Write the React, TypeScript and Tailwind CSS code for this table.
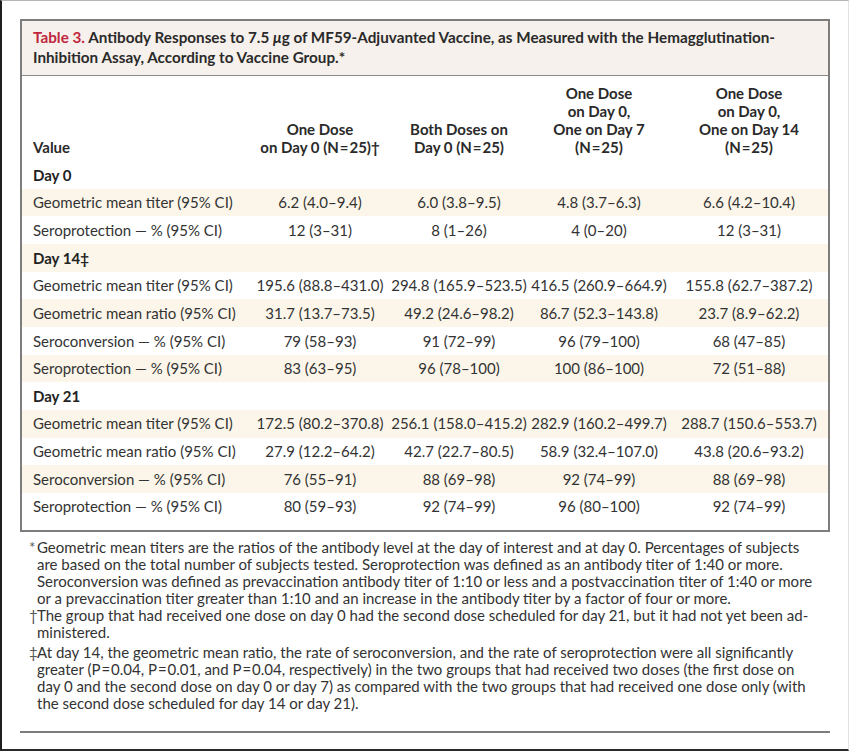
import React from "react";

type Row =
  | { kind: "section"; label: React.ReactNode }
  | { kind: "data"; label: string; values: string[] };

const rows: Row[] = [
  { kind: "section", label: "Day 0" },
  { kind: "data", label: "Geometric mean titer (95% CI)", values: ["6.2 (4.0–9.4)", "6.0 (3.8–9.5)", "4.8 (3.7–6.3)", "6.6 (4.2–10.4)"] },
  { kind: "data", label: "Seroprotection — % (95% CI)", values: ["12 (3–31)", "8 (1–26)", "4 (0–20)", "12 (3–31)"] },
  { kind: "section", label: <>Day 14‡</> },
  { kind: "data", label: "Geometric mean titer (95% CI)", values: ["195.6 (88.8–431.0)", "294.8 (165.9–523.5)", "416.5 (260.9–664.9)", "155.8 (62.7–387.2)"] },
  { kind: "data", label: "Geometric mean ratio (95% CI)", values: ["31.7 (13.7–73.5)", "49.2 (24.6–98.2)", "86.7 (52.3–143.8)", "23.7 (8.9–62.2)"] },
  { kind: "data", label: "Seroconversion — % (95% CI)", values: ["79 (58–93)", "91 (72–99)", "96 (79–100)", "68 (47–85)"] },
  { kind: "data", label: "Seroprotection — % (95% CI)", values: ["83 (63–95)", "96 (78–100)", "100 (86–100)", "72 (51–88)"] },
  { kind: "section", label: "Day 21" },
  { kind: "data", label: "Geometric mean titer (95% CI)", values: ["172.5 (80.2–370.8)", "256.1 (158.0–415.2)", "282.9 (160.2–499.7)", "288.7 (150.6–553.7)"] },
  { kind: "data", label: "Geometric mean ratio (95% CI)", values: ["27.9 (12.2–64.2)", "42.7 (22.7–80.5)", "58.9 (32.4–107.0)", "43.8 (20.6–93.2)"] },
  { kind: "data", label: "Seroconversion — % (95% CI)", values: ["76 (55–91)", "88 (69–98)", "92 (74–99)", "88 (69–98)"] },
  { kind: "data", label: "Seroprotection — % (95% CI)", values: ["80 (59–93)", "92 (74–99)", "96 (80–100)", "92 (74–99)"] },
];

const eq = "\u200A=\u200A";

const footnotes: { mark: string; lines: string[]; extra?: boolean }[] = [
  {
    mark: "*",
    lines: [
      "Geometric mean titers are the ratios of the antibody level at the day of interest and at day 0. Percentages of subjects",
      "are based on the total number of subjects tested. Seroprotection was defined as an antibody titer of 1:40 or more.",
      "Seroconversion was defined as prevaccination antibody titer of 1:10 or less and a postvaccination titer of 1:40 or more",
      "or a prevaccination titer greater than 1:10 and an increase in the antibody titer by a factor of four or more.",
    ],
  },
  {
    mark: "†",
    lines: [
      "The group that had received one dose on day 0 had the second dose scheduled for day 21, but it had not yet been ad-",
      "ministered.",
    ],
  },
  {
    mark: "‡",
    extra: true,
    lines: [
      "At day 14, the geometric mean ratio, the rate of seroconversion, and the rate of seroprotection were all significantly",
      `greater (P${eq}0.04, P${eq}0.01, and P${eq}0.04, respectively) in the two groups that had received two doses (the first dose on`,
      "day 0 and the second dose on day 0 or day 7) as compared with the two groups that had received one dose only (with",
      "the second dose scheduled for day 14 or day 21).",
    ],
  },
];

const gridCols = "grid grid-cols-[228px_140px_138px_142px_158px]";

export default function App() {
  return (
    <div className="h-[751px] w-[849px] overflow-hidden border-t border-b-2 border-l-2 border-r border-t-[#b5b5b5] border-b-[#2a2a2a] border-l-[#1e1e1e] border-r-[#e2e2e2] bg-white pl-[18px] pt-[18px] font-['Lato',sans-serif] text-[15px] text-[#222]">
      <div className="w-[810px] border-2 border-[#7d7d7d]">
        <div className="h-[55px] border-b border-[#8a8a8a] bg-[#f6f1ec] pl-[11px] pt-[6px] text-[15.25px] font-bold leading-[20px] text-[#2a2a2a]">
          <span className="text-[#c0273d]">Table 3.</span> Antibody Responses to 7.5{" "}
          <i>μ</i>g of MF59-Adjuvanted Vaccine, as Measured with the Hemagglutination-
          <br />
          Inhibition Assay, According to Vaccine Group.*
        </div>

        <div className={`${gridCols} h-[85px] items-end pb-[5px] text-center leading-[18px] font-bold text-[#2a2a2a]`}>
          <div className="pl-[11px] text-left">Value</div>
          <div>
            One Dose
            <br />
            on Day 0 (N{eq}25)†
          </div>
          <div>
            Both Doses on
            <br />
            Day 0 (N{eq}25)
          </div>
          <div>
            One Dose
            <br />
            on Day 0,
            <br />
            One on Day 7
            <br />
            (N{eq}25)
          </div>
          <div>
            One Dose
            <br />
            on Day 0,
            <br />
            One on Day 14
            <br />
            (N{eq}25)
          </div>
        </div>

        <div className="pb-[9px]">
          {rows.map((row, i) => (
            <div
              key={i}
              className={`${gridCols} h-[27.67px] items-center ${i % 2 === 1 ? "bg-[#fcf6ea]" : "bg-white"}`}
            >
              {row.kind === "section" ? (
                <div className="pl-[11px] font-bold text-[#222]">{row.label}</div>
              ) : (
                <>
                  <div className="pl-[11px] text-[#333]">{row.label}</div>
                  {row.values.map((v, j) => (
                    <div key={j} className="text-center text-[#333]">
                      {v}
                    </div>
                  ))}
                </>
              )}
            </div>
          ))}
        </div>
      </div>

      <div className="w-[810px] pt-[7px] text-[#333] leading-[17px]">
        {footnotes.map((f) => (
          <div key={f.mark} className={`flex ${f.extra ? "mt-[3px]" : ""}`}>
            <span className="w-[15px] shrink-0 pl-[9px] text-[#555]">{f.mark}</span>
            <div className="pl-[2px]">
              {f.lines.map((l, k) => (
                <div key={k} className="whitespace-nowrap">
                  {l}
                </div>
              ))}
            </div>
          </div>
        ))}
        <div className="mt-[19px] h-[2px] bg-[#7d7d7d]" />
      </div>
    </div>
  );
}
